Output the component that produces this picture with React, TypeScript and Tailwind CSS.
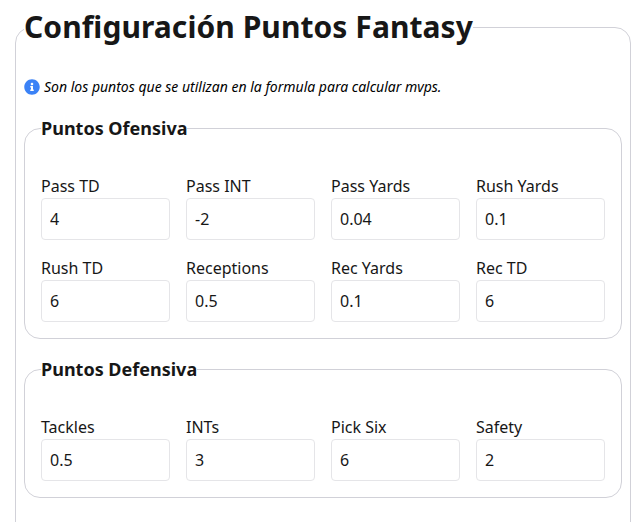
import { useState } from "react";
import { FaInfoCircle } from "react-icons/fa";

const ofensiva = [
  { key: "passTd", label: "Pass TD", value: "4" },
  { key: "passInt", label: "Pass INT", value: "-2" },
  { key: "passYards", label: "Pass Yards", value: "0.04" },
  { key: "rushYards", label: "Rush Yards", value: "0.1" },
  { key: "rushTd", label: "Rush TD", value: "6" },
  { key: "receptions", label: "Receptions", value: "0.5" },
  { key: "recYards", label: "Rec Yards", value: "0.1" },
  { key: "recTd", label: "Rec TD", value: "6" },
];

const defensiva = [
  { key: "tackles", label: "Tackles", value: "0.5" },
  { key: "ints", label: "INTs", value: "3" },
  { key: "pickSix", label: "Pick Six", value: "6" },
  { key: "safety", label: "Safety", value: "2" },
];

type Field = { key: string; label: string; value: string };

function PointsGroup({ title, fields }: { title: string; fields: Field[] }) {
  const [points, setPoints] = useState<Record<string, string>>(
    Object.fromEntries(fields.map((f) => [f.key, f.value]))
  );

  return (
    <fieldset className="min-w-0 rounded-2xl border border-[#d1d1d8] px-4 pb-4">
      <legend className="text-lg leading-7 font-bold">{title}</legend>
      <div className="mt-8 grid grid-cols-4 gap-4">
        {fields.map((f) => (
          <label key={f.key} className="block min-w-0">
            <span className="block leading-6">{f.label}</span>
            <input
              className="block h-[42px] w-full rounded border border-[#e5e5e8] bg-white px-2 outline-none focus:border-blue-500"
              value={points[f.key]}
              onChange={(e) => setPoints({ ...points, [f.key]: e.target.value })}
            />
          </label>
        ))}
      </div>
    </fieldset>
  );
}

export default function App() {
  return (
    <div className="h-[522px] overflow-hidden bg-white pt-[7px] pr-3 pl-[15px] font-['Noto_Sans',sans-serif] text-base text-[#171717]">
      <fieldset className="min-h-[560px] min-w-0 rounded-2xl border border-[#d1d1d8] px-2">
        <legend className="text-3xl leading-10 font-bold tracking-[0.06px]">Configuración Puntos Fantasy</legend>
        <p className="mt-7 flex items-center gap-1 text-sm leading-6 text-black italic">
          <FaInfoCircle className="size-4 text-[#3b82f6]" />
          Son los puntos que se utilizan en la formula para calcular mvps.
        </p>
        <div className="mt-[15px] flex flex-col gap-4">
          <PointsGroup title="Puntos Ofensiva" fields={ofensiva} />
          <PointsGroup title="Puntos Defensiva" fields={defensiva} />
        </div>
      </fieldset>
    </div>
  );
}
